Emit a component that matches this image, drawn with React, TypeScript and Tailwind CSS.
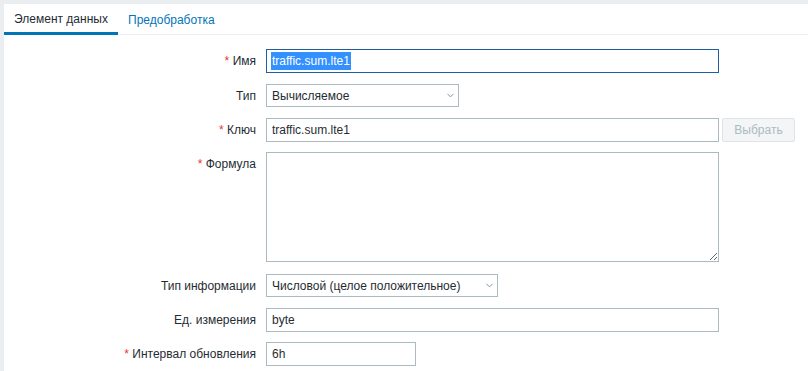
import { ChevronDown } from 'lucide-react'

const font = { fontFamily: '"Liberation Sans", Arial, sans-serif' }

function Label({ text, required }: { text: string; required?: boolean }) {
  return (
    <div className="w-[252px] shrink-0 text-right leading-[24px] text-[12px] text-[#1f2c33]">
      {required && <span className="text-[#e33734]">* </span>}
      {text}
    </div>
  )
}

function Select({ value, width }: { value: string; width: string }) {
  return (
    <div
      className={`${width} h-[23px] border border-[#acbbc2] bg-white flex items-center justify-between pl-[5px] pr-[2px] text-[12px] text-[#1f2c33]`}
    >
      <span>{value}</span>
      <ChevronDown className="w-[11px] h-[11px] text-[#768d99]" strokeWidth={2} />
    </div>
  )
}

function TextInput({ value, width }: { value: string; width: string }) {
  return (
    <div
      className={`${width} h-[24px] border border-[#acbbc2] bg-white flex items-center px-[5px] text-[12px] text-[#1f2c33]`}
    >
      {value}
    </div>
  )
}

export default function App() {
  return (
    <div className="w-[808px] h-[371px] overflow-hidden bg-[#ebeef0] pl-[4px] pt-[4px]" style={font}>
      <div className="h-full bg-white">
        {/* Tabs */}
        <div className="flex h-[31px] border-b border-[#ebeef0] text-[12px]">
          <div className="w-[114px] flex items-center justify-center border-b-[3px] border-[#0275b8] text-[#1f2c33] -mb-px pt-[1px]">
            Элемент данных
          </div>
          <div className="px-[10px] flex items-center text-[#0275b8] pt-[1px]">Предобработка</div>
        </div>

        {/* Form */}
        <div className="flex flex-col gap-[10px] pt-[14px]">
          <div className="flex gap-[10px]">
            <Label text="Имя" required />
            <div className="w-[453px] h-[24px] border border-[#1f5f9f] bg-white flex items-center px-[4px] text-[12px]">
              <span className="bg-[#3390ff] text-white px-[1px]">traffic.sum.lte1</span>
            </div>
          </div>

          <div className="flex gap-[10px] mt-[1px]">
            <Label text="Тип" />
            <Select value="Вычисляемое" width="w-[193px]" />
          </div>

          <div className="flex gap-[10px]">
            <Label text="Ключ" required />
            <TextInput value="traffic.sum.lte1" width="w-[453px]" />
            <div className="-ml-[7px] w-[73px] h-[24px] border border-[#dfe4e7] bg-[#f3f5f6] rounded-[2px] flex items-center justify-center text-[12px] text-[#acbbc2]">
              Выбрать
            </div>
          </div>

          <div className="flex gap-[10px]">
            <Label text="Формула" required />
            <textarea
              readOnly
              className="w-[453px] h-[110px] border border-[#acbbc2] bg-white outline-none resize"
            />
          </div>

          <div className="flex gap-[10px] mt-[2px]">
            <Label text="Тип информации" />
            <Select value="Числовой (целое положительное)" width="w-[232px]" />
          </div>

          <div className="flex gap-[10px]">
            <Label text="Ед. измерения" />
            <TextInput value="byte" width="w-[453px]" />
          </div>

          <div className="flex gap-[10px]">
            <Label text="Интервал обновления" required />
            <TextInput value="6h" width="w-[150px]" />
          </div>
        </div>
      </div>
    </div>
  )
}
